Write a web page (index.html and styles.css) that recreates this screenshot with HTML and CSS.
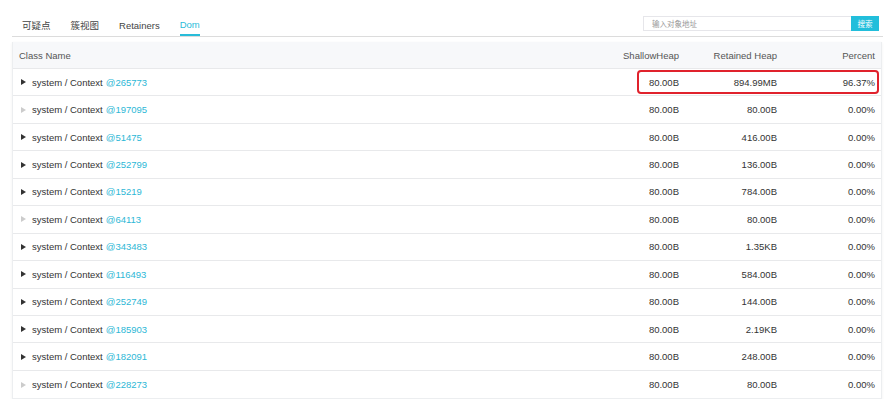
FILE: index.html
```html
<!DOCTYPE html>
<html lang="zh">
<head>
<meta charset="utf-8">
<link rel="stylesheet" href="styles.css">
</head>
<body>
<div class="page">
  <div class="topbar">
    <div class="tabs">
      <div class="tab">可疑点</div>
      <div class="tab">簇视图</div>
      <div class="tab">Retainers</div>
      <div class="tab active">Dom</div>
    </div>
    <div class="search">
      <input class="search-input" type="text" placeholder="输入对象地址">
      <button class="search-btn">搜索</button>
    </div>
  </div>
  <div class="table">
    <div class="row head">
      <div class="cell name">Class Name</div>
      <div class="cell num">ShallowHeap</div>
      <div class="cell num">Retained Heap</div>
      <div class="cell num">Percent</div>
    </div>
    <div class="row hl">
      <div class="cell name"><span class="tri"></span>system / Context <span class="addr">@265773</span></div>
      <div class="cell num">80.00B</div>
      <div class="cell num">894.99MB</div>
      <div class="cell num">96.37%</div>
      <div class="mark"></div>
    </div>
    <div class="row">
      <div class="cell name"><span class="tri off"></span>system / Context <span class="addr">@197095</span></div>
      <div class="cell num">80.00B</div>
      <div class="cell num">80.00B</div>
      <div class="cell num">0.00%</div>
    </div>
    <div class="row">
      <div class="cell name"><span class="tri"></span>system / Context <span class="addr">@51475</span></div>
      <div class="cell num">80.00B</div>
      <div class="cell num">416.00B</div>
      <div class="cell num">0.00%</div>
    </div>
    <div class="row">
      <div class="cell name"><span class="tri"></span>system / Context <span class="addr">@252799</span></div>
      <div class="cell num">80.00B</div>
      <div class="cell num">136.00B</div>
      <div class="cell num">0.00%</div>
    </div>
    <div class="row">
      <div class="cell name"><span class="tri"></span>system / Context <span class="addr">@15219</span></div>
      <div class="cell num">80.00B</div>
      <div class="cell num">784.00B</div>
      <div class="cell num">0.00%</div>
    </div>
    <div class="row">
      <div class="cell name"><span class="tri off"></span>system / Context <span class="addr">@64113</span></div>
      <div class="cell num">80.00B</div>
      <div class="cell num">80.00B</div>
      <div class="cell num">0.00%</div>
    </div>
    <div class="row">
      <div class="cell name"><span class="tri"></span>system / Context <span class="addr">@343483</span></div>
      <div class="cell num">80.00B</div>
      <div class="cell num">1.35KB</div>
      <div class="cell num">0.00%</div>
    </div>
    <div class="row">
      <div class="cell name"><span class="tri"></span>system / Context <span class="addr">@116493</span></div>
      <div class="cell num">80.00B</div>
      <div class="cell num">584.00B</div>
      <div class="cell num">0.00%</div>
    </div>
    <div class="row">
      <div class="cell name"><span class="tri"></span>system / Context <span class="addr">@252749</span></div>
      <div class="cell num">80.00B</div>
      <div class="cell num">144.00B</div>
      <div class="cell num">0.00%</div>
    </div>
    <div class="row">
      <div class="cell name"><span class="tri"></span>system / Context <span class="addr">@185903</span></div>
      <div class="cell num">80.00B</div>
      <div class="cell num">2.19KB</div>
      <div class="cell num">0.00%</div>
    </div>
    <div class="row">
      <div class="cell name"><span class="tri"></span>system / Context <span class="addr">@182091</span></div>
      <div class="cell num">80.00B</div>
      <div class="cell num">248.00B</div>
      <div class="cell num">0.00%</div>
    </div>
    <div class="row last">
      <div class="cell name"><span class="tri off"></span>system / Context <span class="addr">@228273</span></div>
      <div class="cell num">80.00B</div>
      <div class="cell num">80.00B</div>
      <div class="cell num">0.00%</div>
    </div>
  </div>
</div>
</body>
</html>
```
FILE: styles.css
```css
* { box-sizing: border-box; }
html, body { margin: 0; padding: 0; background: #fff; }
body {
  font-family: "Liberation Sans", Arial, "Noto Sans CJK SC", sans-serif;
  font-size: 9.5px;
  color: #333;
}
.page { padding: 14px 7px 0 12px; }
.topbar {
  display: flex;
  height: 23px;
  border-bottom: 1px solid #dcdcdc;
}
.tabs { display: flex; gap: 20px; padding-left: 10px; }
.tab {
  height: 22px;
  line-height: 22px;
  padding-top: 1px;
  color: #444;
  font-family: "Liberation Sans", "Noto Sans CJK SC", sans-serif;
}
.tab.active {
  color: #29bcd9;
  border-bottom: 2px solid #29bcd9;
  line-height: 20px;
}
.search {
  margin-left: auto;
  margin-right: 4px;
  margin-top: 2px;
  display: flex;
  height: 15px;
}
.search-input {
  width: 208px;
  height: 15px;
  border: 1px solid #e6e6ea;
  border-right: none;
  padding: 0 0 0 8px;
  margin: 0;
  font-family: "Noto Sans CJK SC", sans-serif;
  font-size: 7.5px;
  color: #333;
  outline: none;
}
.search-input::placeholder { color: #999; }
.search-btn {
  width: 28px;
  height: 15px;
  margin: 0;
  padding: 0;
  border: none;
  background: #22bedb;
  color: #fff;
  font-family: "Noto Sans CJK SC", sans-serif;
  font-size: 7.5px;
}
.table {
  margin-top: 5px;
  margin-right: 1px;
  border: 1px solid #eceef0;
  border-top: none;
  box-shadow: 0 1px 3px rgba(0,0,0,0.06);
}
.row {
  position: relative;
  display: grid;
  grid-template-columns: 1fr 98px 98px 98px;
  height: 27.45px;
  border-bottom: 1px solid #e8e9eb;
  align-items: center;
}
.row.last { border-bottom: none; }
.row.head { height: 27px; background: #f7f8fa; color: #555; }
.cell { white-space: nowrap; }
.cell.name { padding-left: 6px; display: flex; align-items: center; }
.cell.num { text-align: right; padding-right: 6px; }
.tri {
  display: inline-block;
  width: 0; height: 0;
  border-top: 3px solid transparent;
  border-bottom: 3px solid transparent;
  border-left: 5px solid #333;
  margin: 0 6px 0 2px;
}
.tri.off { border-left-color: #ccc; }
.addr { color: #2db7d6; margin-left: 3px; }
.mark {
  position: absolute;
  left: 624px;
  right: 2px;
  top: 1px;
  bottom: 1px;
  border: 2px solid #e0222c;
  border-radius: 4px;
}
```
